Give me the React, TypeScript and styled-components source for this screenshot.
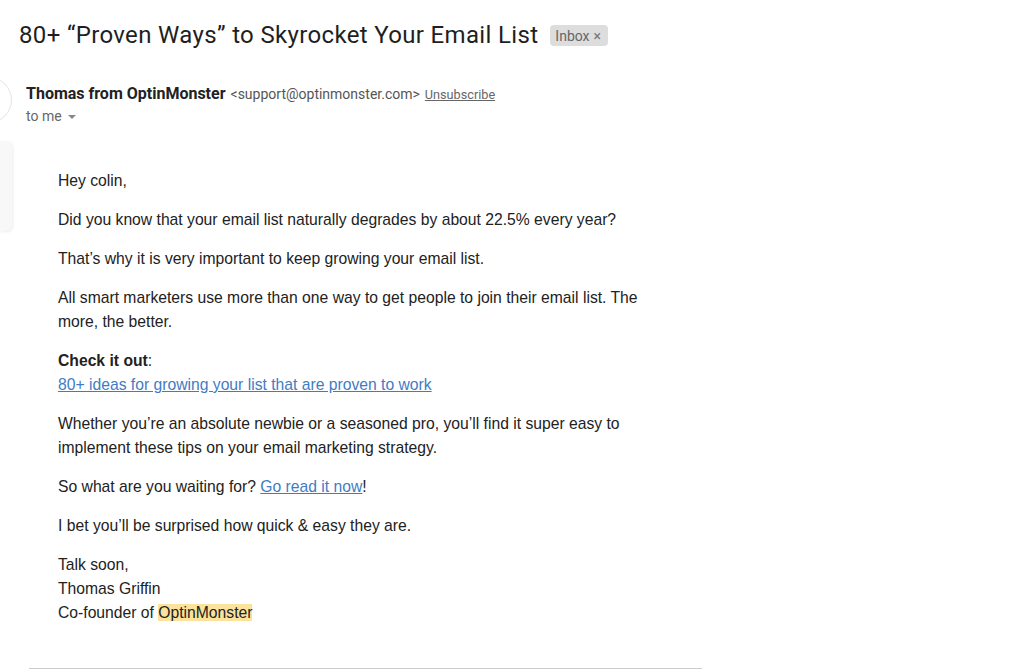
import React from 'react';
import styled, { createGlobalStyle } from 'styled-components';

const GlobalStyle = createGlobalStyle`
  html, body {
    margin: 0;
    padding: 0;
    background: #ffffff;
  }
  body {
    font-family: Roboto, "Liberation Sans", Arial, sans-serif;
    color: #222;
    overflow: hidden;
  }
`;

const paragraphs: React.ReactNode[] = [
  'Hey colin,',
  'Did you know that your email list naturally degrades by about 22.5% every year?',
  'That’s why it is very important to keep growing your email list.',
  'All smart marketers use more than one way to get people to join their email list. The more, the better.',
];

const App: React.FC = () => {
  return (
    <>
      <GlobalStyle />
      <Page>
        <SubjectRow>
          <Subject>80+ “Proven Ways” to Skyrocket Your Email List</Subject>
          <Chip>
            Inbox <ChipClose>×</ChipClose>
          </Chip>
        </SubjectRow>

        <Thread>
          <Rail>
            <Avatar />
            <SideCard />
          </Rail>

          <Message>
            <SenderLine>
              <SenderName>Thomas from OptinMonster</SenderName>
              <SenderEmail>&lt;support@optinmonster.com&gt;</SenderEmail>
              <Unsub>Unsubscribe</Unsub>
            </SenderLine>
            <ToLine>
              to me <Caret />
            </ToLine>

            <Body>
              {paragraphs.map((p, i) => (
                <P key={i}>{p}</P>
              ))}
              <P>
                <b>Check it out</b>:
                <br />
                <Link>80+ ideas for growing your list that are proven to work</Link>
              </P>
              <P>
                Whether you’re an absolute newbie or a seasoned pro, you’ll find it super easy to
                implement these tips on your email marketing strategy.
              </P>
              <P>
                So what are you waiting for? <Link>Go read it now</Link>!
              </P>
              <P>I bet you’ll be surprised how quick &amp; easy they are.</P>
              <P>
                Talk soon,
                <br />
                Thomas Griffin
                <br />
                Co-founder of <Highlight>OptinMonster</Highlight>
              </P>
            </Body>
          </Message>
        </Thread>
        <Divider />
      </Page>
    </>
  );
};

const Page = styled.div`
  width: 1021px;
  height: 672px;
  overflow: hidden;
  box-sizing: border-box;
  padding-top: 19px;
`;

const SubjectRow = styled.div`
  display: flex;
  align-items: center;
  gap: 12px;
  padding-left: 19px;
`;

const Subject = styled.h2`
  margin: 0;
  font-family: Roboto, "Liberation Sans", Arial, sans-serif;
  font-weight: 400;
  font-size: 24px;
  line-height: 32px;
  color: #1f1f1f;
  letter-spacing: 0.34px;
`;

const Chip = styled.span`
  display: inline-flex;
  align-items: center;
  gap: 4px;
  height: 21px;
  padding: 0 7px 0 5px;
  margin-top: 1px;
  border-radius: 4px;
  background: #dddddd;
  color: #666;
  font-size: 14px;
`;

const ChipClose = styled.span`
  font-size: 14px;
  color: #777;
`;

const Thread = styled.div`
  display: flex;
  margin-top: 32px;
`;

const Rail = styled.div`
  width: 26px;
  flex: none;
  display: flex;
  flex-direction: column;
`;

const Avatar = styled.div`
  width: 44px;
  height: 44px;
  margin-left: -34px;
  margin-top: -6px;
  border-radius: 50%;
  border: 1px solid #e3e3e3;
  background: #fff;
`;

const SideCard = styled.div`
  width: 12px;
  height: 90px;
  margin-top: 18px;
  border-radius: 0 6px 6px 0;
  background: #f8f8f8;
  box-shadow: 1px 1px 3px rgba(0, 0, 0, 0.08);
`;

const Message = styled.div`
  flex: 1;
`;

const SenderLine = styled.div`
  display: flex;
  align-items: baseline;
  gap: 5px;
  line-height: 22px;
`;

const SenderName = styled.span`
  font-weight: 700;
  font-size: 16px;
  color: #222;
`;

const SenderEmail = styled.span`
  font-size: 14px;
  color: #555;
`;

const Unsub = styled.span`
  font-size: 12.7px;
  color: #666;
  text-decoration: underline;
`;

const ToLine = styled.div`
  display: flex;
  align-items: center;
  gap: 6px;
  margin-top: 0;
  font-size: 14px;
  color: #666;
  line-height: 20px;
`;

const Caret = styled.span`
  width: 0;
  height: 0;
  margin-top: 1px;
  border-left: 4px solid transparent;
  border-right: 4px solid transparent;
  border-top: 4px solid #888;
`;

const Body = styled.div`
  width: 610px;
  margin-top: 43px;
  padding-left: 32px;
  font-family: "Liberation Sans", Arial, sans-serif;
  font-size: 15.7px;
  line-height: 24px;
  color: #222;
`;

const P = styled.p`
  margin: 0 0 15px;

  b {
    font-weight: 700;
  }
`;

const Link = styled.a`
  color: #3f7cc4;
  text-decoration: underline;
  cursor: pointer;
`;

const Highlight = styled.span`
  background: #fce29a;
`;

const Divider = styled.div`
  width: 673px;
  height: 1px;
  margin-left: 29px;
  margin-top: 28px;
  background: #cccccc;
`;

export default App;
